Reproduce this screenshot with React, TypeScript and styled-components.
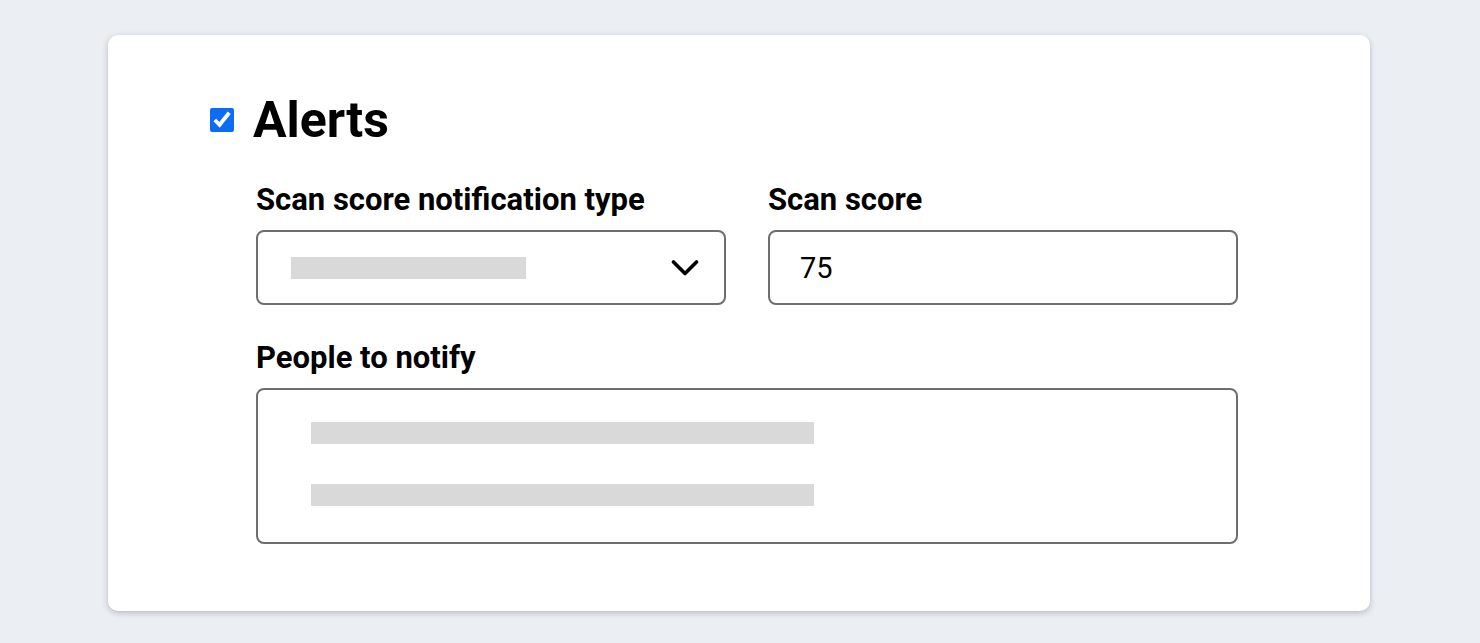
import styled, { createGlobalStyle } from 'styled-components';

const GlobalStyle = createGlobalStyle`
    html, body {
        margin: 0;
        padding: 0;
    }

    body {
        background: #ebeef3;
        font-family: Roboto, "Liberation Sans", Arial, sans-serif;
        color: #000;
    }
`;

const Page = styled.div`
    display: flex;
    align-items: flex-start;
    padding: 35px 0 0 108px;
    min-height: 100vh;
    box-sizing: border-box;
`;

const Card = styled.section`
    width: 1262px;
    box-sizing: border-box;
    padding: 55px 0 67px 102px;
    background: #fff;
    border-radius: 10px;
    box-shadow: 0 2px 6px rgba(0, 0, 0, 0.22);
`;

const Header = styled.label`
    display: flex;
    align-items: center;
    gap: 19px;

    input {
        width: 24px;
        height: 24px;
        margin: 0;
        accent-color: #0b6cf5;
    }

    h2 {
        margin: 0;
        font-size: 50px;
        line-height: 60px;
        font-weight: 700;
    }
`;

const Fields = styled.div`
    display: grid;
    grid-template-columns: 470px 470px;
    column-gap: 42px;
    margin: 33px 0 0 46px;
`;

const Field = styled.div<{ $wide?: boolean }>`
    display: flex;
    flex-direction: column;
    grid-column: ${(p) => (p.$wide ? '1 / span 2' : 'auto')};
    margin-top: ${(p) => (p.$wide ? '36px' : '0')};
`;

const Label = styled.span`
    font-size: 31px;
    font-weight: 700;
    line-height: 34px;
    margin-bottom: 13px;
`;

const Box = styled.div<{ $tall?: boolean }>`
    box-sizing: border-box;
    border: 2px solid #6e6e6e;
    border-radius: 8px;
    height: ${(p) => (p.$tall ? '156px' : '75px')};
`;

const SelectBox = styled(Box)`
    display: flex;
    align-items: center;
    justify-content: space-between;
    padding: 0 25px 0 33px;
`;

const InputBox = styled(Box)`
    display: flex;
    align-items: center;
    padding: 0 30px;
    font-size: 29px;
    font-weight: 400;
`;

const ListBox = styled(Box)`
    display: flex;
    flex-direction: column;
    gap: 40px;
    padding: 32px 0 0 53px;
`;

const Skeleton = styled.div<{ $width: number }>`
    width: ${(p) => p.$width}px;
    height: 22px;
    background: #d9d9d9;
`;

const Chevron = () => (
    <svg width="28" height="18" viewBox="0 0 28 18" fill="none">
        <path d="M2.5 3 L14 14.5 L25.5 3" stroke="#000" strokeWidth="3.6" strokeLinecap="round" strokeLinejoin="round" />
    </svg>
);

const App = (): JSX.Element => (
    <Page>
        <GlobalStyle />
        <Card>
            <Header>
                <input type="checkbox" defaultChecked />
                <h2>Alerts</h2>
            </Header>
            <Fields>
                <Field>
                    <Label>Scan score notification type</Label>
                    <SelectBox>
                        <Skeleton $width={235} />
                        <Chevron />
                    </SelectBox>
                </Field>
                <Field>
                    <Label>Scan score</Label>
                    <InputBox>75</InputBox>
                </Field>
                <Field $wide>
                    <Label>People to notify</Label>
                    <ListBox $tall>
                        <Skeleton $width={503} />
                        <Skeleton $width={503} />
                    </ListBox>
                </Field>
            </Fields>
        </Card>
    </Page>
);

export default App;
